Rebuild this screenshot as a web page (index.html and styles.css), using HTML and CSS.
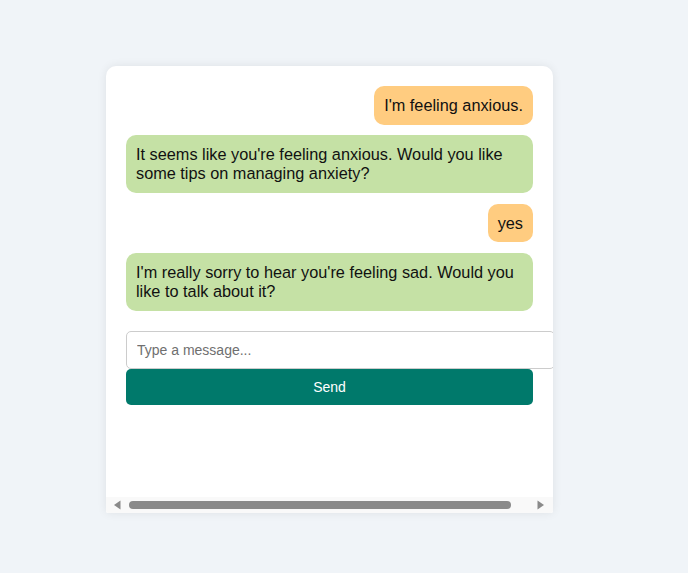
FILE: index.html
```html
<!DOCTYPE html>
<html>
<head>
<meta charset="utf-8">
<link rel="stylesheet" href="styles.css">
</head>
<body>
<div class="page">
  <div class="chat">
    <div class="messages">
      <div class="msg user">I'm feeling anxious.</div>
      <div class="msg bot">It seems like you're feeling anxious. Would you like some tips on managing anxiety?</div>
      <div class="msg user">yes</div>
      <div class="msg bot">I'm really sorry to hear you're feeling sad. Would you like to talk about it?</div>
    </div>
    <input class="input" type="text" placeholder="Type a message...">
    <button class="send">Send</button>
    <div class="hscroll" aria-hidden="true">
      <svg class="arrow" width="8" height="10" viewBox="0 0 8 10"><path d="M7.5 0.5 L7.5 9.5 L1 5 Z" fill="#8a8a8a"/></svg>
      <div class="thumb"></div>
      <svg class="arrow right" width="8" height="10" viewBox="0 0 8 10"><path d="M0.5 0.5 L0.5 9.5 L7 5 Z" fill="#8a8a8a"/></svg>
    </div>
  </div>
</div>
</body>
</html>
```

FILE: styles.css
```css
html, body {
  margin: 0;
  padding: 0;
}
body {
  background: #f0f4f8;
  font-family: "Liberation Sans", Arial, sans-serif;
}
.page {
  height: 573px;
  display: flex;
  align-items: center;
  padding-left: 106px;
  box-sizing: border-box;
}
.chat {
  width: 447px;
  height: 447px;
  box-sizing: border-box;
  background: #fff;
  border-radius: 10px 10px 2px 2px;
  box-shadow: 0 0 10px rgba(0, 0, 0, 0.08);
  padding: 20px 20px 0;
  overflow: hidden;
  margin-top: 6px;
  display: flex;
  flex-direction: column;
}
.messages {
  display: flex;
  flex-direction: column;
  margin-bottom: 10px;
}
.msg {
  font-size: 16.3px;
  line-height: 18.8px;
  padding: 10px;
  border-radius: 10px;
  margin-bottom: 10.6px;
  color: #111;
}
.user {
  align-self: flex-end;
  background: #ffcc80;
}
.bot {
  align-self: stretch;
  background: #c5e1a5;
}
.input {
  display: block;
  flex: none;
  width: calc(100% + 22px);
  box-sizing: border-box;
  padding: 10px;
  font-size: 14px;
  font-family: "Liberation Sans", Arial, sans-serif;
  border: 1px solid #ccc;
  border-radius: 5px;
  outline: none;
  margin: 0;
}
.input::placeholder {
  color: #6f6f6f;
}
.send {
  display: block;
  flex: none;
  width: 100%;
  padding: 10px;
  font-size: 14px;
  font-family: "Liberation Sans", Arial, sans-serif;
  background: #00796b;
  color: #fff;
  border: none;
  border-radius: 5px;
  margin: 0;
  cursor: pointer;
}
.hscroll {
  margin: auto -20px 0;
  height: 16px;
  flex: none;
  background: #f9f9f9;
  display: flex;
  align-items: center;
  padding: 0 8px 0 7px;
}
.arrow {
  flex: none;
  display: block;
}
.thumb {
  width: 382px;
  height: 8px;
  margin-left: 8px;
  background: #8a8a8a;
  border-radius: 4px;
}
.arrow.right {
  margin-left: auto;
}
```
